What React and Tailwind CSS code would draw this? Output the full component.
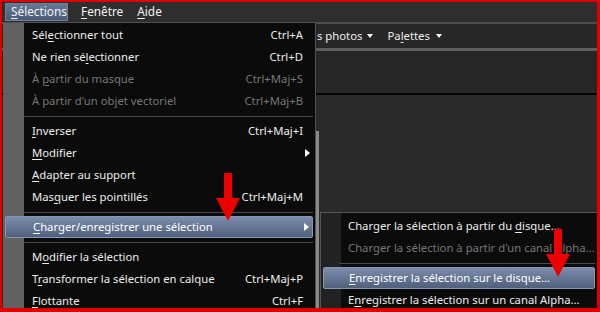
import React from "react";

const font = "font-['Segoe_UI','Noto_Sans',sans-serif]";

const mainItems = [
  { pre: "Sél", u: "e", post: "ctionner tout", key: "Ctrl+A" },
  { pre: "Ne rien sé", u: "l", post: "ectionner", key: "Ctrl+D" },
  { pre: "À ", u: "p", post: "artir du masque", key: "Ctrl+Maj+S", off: true },
  { pre: "À partir d'un ob", u: "j", post: "et vectoriel", key: "Ctrl+Maj+B", off: true },
  { sep: true },
  { pre: "", u: "I", post: "nverser", key: "Ctrl+Maj+I" },
  { pre: "", u: "M", post: "odifier", sub: true },
  { pre: "", u: "A", post: "dapter au support" },
  { pre: "Mas", u: "q", post: "uer les pointillés", key: "Ctrl+Maj+M" },
  { sep: true },
  { pre: "", u: "C", post: "harger/enregistrer une sélection", sub: true, active: true },
  { sep: true },
  { pre: "M", u: "o", post: "difier la sélection" },
  { pre: "T", u: "r", post: "ansformer la sélection en calque", key: "Ctrl+Maj+P" },
  { pre: "", u: "F", post: "lottante", key: "Ctrl+F" },
];

const subItems = [
  { pre: "Charger la sélection à partir du ", u: "d", post: "isque..." },
  { pre: "Charger la sélection à partir d'un canal ", u: "A", post: "lpha...", off: true },
  { sep: true },
  { pre: "", u: "E", post: "nregistrer la sélection sur le disque...", active: true },
  { pre: "E", u: "n", post: "registrer la sélection sur un canal Alpha..." },
];

const Label = ({ item }) => (
  <span className="whitespace-nowrap">
    {item.pre}
    <span className="underline underline-offset-2">{item.u}</span>
    {item.post}
  </span>
);

const Row = ({ item, pl }) => (
  <div
    className={`h-[22px] mx-[2px] flex items-center whitespace-nowrap pr-[10px] ${pl} ${
      item.active
        ? "bg-[linear-gradient(#7b8dac,#4f607c)] border border-[#8797b3] rounded-[2px] text-white"
        : item.off
        ? "text-[#767676]"
        : "text-[#ececec]"
    }`}
  >
    <Label item={item} />
    {item.key && <span className="ml-auto">{item.key}</span>}
    {item.sub && (
      <span className="ml-auto -mr-[7px] w-0 h-0 border-y-[4px] border-y-transparent border-l-[5px] border-l-white" />
    )}
  </div>
);

const Sep = ({ ml }) => (
  <div className="h-[8px] flex items-center">
    <div className={`h-px flex-1 bg-[#4a4a4a] mr-[2px] ${ml}`} />
  </div>
);

const Arrow = ({ className }) => (
  <svg className={className} width="24" height="48" viewBox="0 0 24 48">
    <rect x="8" y="0" width="8" height="28" fill="#ee0000" />
    <polygon points="0,25 24,25 12,48" fill="#ee0000" />
  </svg>
);

const App = () => {
  return (
    <div className={`w-[600px] h-[312px] bg-[#e10000] pt-[2px] pl-[2px] pr-[3px] pb-[4px] text-[11.3px] ${font}`}>
      <div className="relative w-full h-full overflow-hidden bg-[#2a2a2a]">
        {/* menubar */}
        <div className="h-[20px] bg-[#2e2e2e] flex items-center text-[#f2f2f2] text-[11.8px]">
          <div className="ml-[3px] h-[18px] w-[63px] px-[5px] flex items-center bg-[linear-gradient(#667896,#4c5c77)] border border-[#6f7f9a]">
            <Label item={{ pre: "", u: "S", post: "élections" }} />
          </div>
          <div className="ml-[8px] px-[5px]">
            <Label item={{ pre: "", u: "F", post: "enêtre" }} />
          </div>
          <div className="ml-[4px] px-[5px]">
            <Label item={{ pre: "", u: "A", post: "ide" }} />
          </div>
        </div>

        {/* toolbar behind the menu */}
        <div className="h-[2px] bg-[#4c4c4c]" />
        <div className="h-[24px] bg-[#272727] flex items-center text-[#ededed]">
          <div className="ml-[315px] whitespace-nowrap">s photos</div>
          <span className="ml-[5px] w-0 h-0 border-x-[3px] border-x-transparent border-t-[4px] border-t-white" />
          <div className="ml-[14px]">
            <Label item={{ pre: "Pa", u: "l", post: "ettes" }} />
          </div>
          <span className="ml-[6px] w-0 h-0 border-x-[3px] border-x-transparent border-t-[4px] border-t-white" />
        </div>
        <div className="h-[3px] bg-[#5e5e5e]" />
        <div className="h-[42px] bg-[#262626]" />
        <div className="h-[2px] bg-[#050505]" />
        <div className="flex h-full">
          <div className="w-[313px]" />
          <div className="w-[4px] mt-[36px] bg-[#8a8a8a]" />
          <div className="flex-1 bg-[#2a2a2a]" />
        </div>

        {/* watermark */}
        <div className="absolute left-[300px] top-[110px] -rotate-[62deg] text-[26px] font-bold text-white/[0.02] whitespace-nowrap">
          VioletteGraph
        </div>

        {/* main dropdown */}
        <div className="absolute left-[1px] top-[20px] w-[313px] pt-[1px] border-t border-r border-[#505050] bg-[linear-gradient(90deg,#616161_21px,#0b0b0b_21px)]">
          {mainItems.map((item, i) =>
            item.sep ? <Sep key={i} ml="ml-[20px]" /> : <Row key={i} item={item} pl="pl-[27px]" />
          )}
        </div>

        {/* submenu */}
        <div className="absolute left-[318px] top-[210px] right-0 bottom-0 pt-[2px] border-t border-l border-[#555555] bg-[linear-gradient(90deg,#222222_20px,#0b0b0b_20px)]">
          {subItems.map((item, i) =>
            item.sep ? <Sep key={i} ml="ml-[18px]" /> : <Row key={i} item={item} pl="pl-[25px]" />
          )}
        </div>

        <Arrow className="absolute left-[214px] top-[171px]" />
        <Arrow className="absolute left-[544px] top-[227px]" />
      </div>
    </div>
  );
};

export default App;
